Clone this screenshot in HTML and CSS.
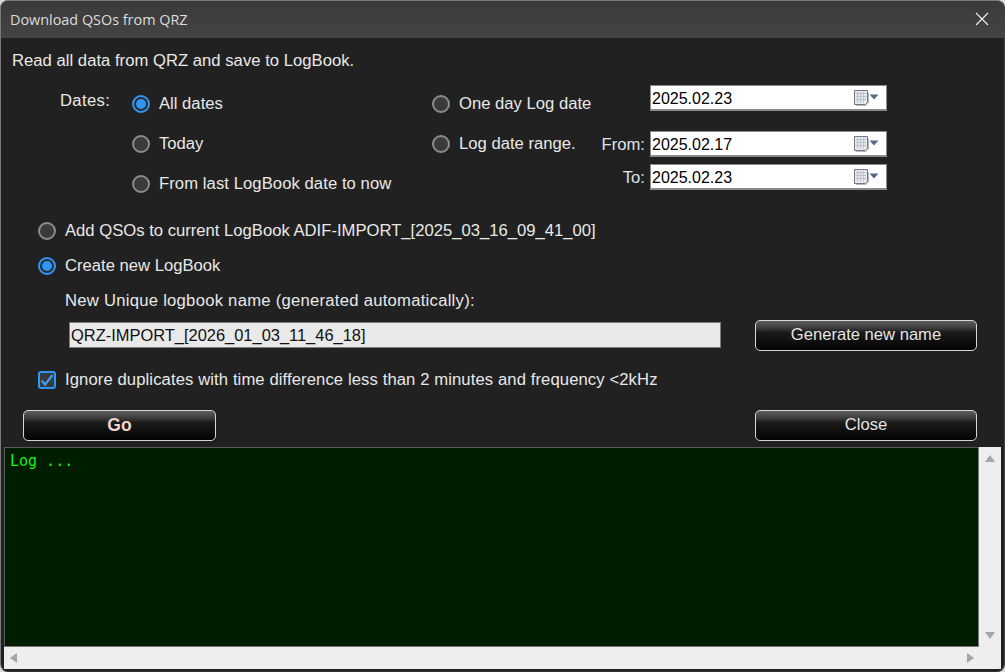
FILE: index.html
```html
<!DOCTYPE html>
<html lang="en">
<head>
<meta charset="utf-8">
<title>Download QSOs from QRZ</title>
<link rel="stylesheet" href="styles.css">
</head>
<body>
<svg class="defs" width="0" height="0" aria-hidden="true">
  <symbol id="cal" viewBox="0 0 26 16">
    <path d="M1.500 .5H14.500V12.500L12.500 14.500H1.500Z" fill="#e4e7ee" stroke="#77767a"/>
    <path d="M15.500 3V13L13 15.500H3" fill="none" stroke="#b9b9bb"/>
    <path d="M3 3.500H13M3 6.500H13M3 9.500H13M4.500 2V12.500M7.500 2V12.500M10.500 2V12.500" stroke="#bcc4d2" fill="none"/>
    <path d="M16.500 4.500H25.500L21 9.500Z" fill="#53688c"/>
  </symbol>
</svg>
<main class="window">
  <header class="titlebar">
    <span class="title">Download QSOs from QRZ</span>
    <svg class="close" width="14" height="14" viewBox="0 0 14 14"><path d="M1 1L13 13M13 1L1 13" stroke="#f0f0f0" stroke-width="1.1" fill="none"/></svg>
  </header>
  <div class="content">
    <p class="intro">Read all data from QRZ and save to LogBook.</p>

    <section class="dates">
      <span class="dates-label">Dates:</span>
      <div class="radio-col">
        <label class="opt"><i class="radio on"></i>All dates</label>
        <label class="opt"><i class="radio"></i>Today</label>
        <label class="opt spaced-s"><i class="radio"></i>From last LogBook date to now</label>
      </div>
      <div class="radio-col range-col">
        <label class="opt"><i class="radio"></i>One day Log date</label>
        <label class="opt"><i class="radio"></i>Log date range.</label>
      </div>
      <div class="fields">
        <div class="field first"><span class="date">2025.02.23<svg class="cal"><use href="#cal"/></svg></span></div>
        <div class="field second"><span class="field-label">From:</span><span class="date">2025.02.17<svg class="cal"><use href="#cal"/></svg></span></div>
        <div class="field third"><span class="field-label">To:</span><span class="date">2025.02.23<svg class="cal"><use href="#cal"/></svg></span></div>
      </div>
    </section>

    <section class="target">
      <label class="opt"><i class="radio"></i>Add QSOs to current LogBook ADIF-IMPORT_[2025_03_16_09_41_00]</label>
      <label class="opt"><i class="radio on"></i>Create new LogBook</label>
      <p class="hint">New Unique logbook name (generated automatically):</p>
      <div class="name-row">
        <span class="name-input">QRZ-IMPORT_[2026_01_03_11_46_18]</span>
        <button class="btn wide" type="button">Generate new name</button>
      </div>
      <label class="opt check-row"><i class="check"><svg width="14" height="14" viewBox="0 0 14 14"><path d="M1.500 7.500L5.200 11.500L12.500 2" fill="none" stroke="#3f9bf0" stroke-width="2.200"/></svg></i>Ignore duplicates with time difference less than 2 minutes and frequency &lt;2kHz</label>
    </section>

    <div class="actions">
      <button class="btn go" type="button">Go</button>
      <button class="btn wide" type="button">Close</button>
    </div>

    <section class="log">
      <div class="log-top">
        <pre class="log-text">Log ...</pre>
        <div class="vscroll"><i class="tri up"></i><i class="tri down"></i></div>
      </div>
      <div class="hscroll"><i class="tri left"></i><i class="tri right"></i></div>
    </section>
  </div>
</main>
</body>
</html>
```
FILE: styles.css
```css
* { box-sizing: border-box; }
html, body { margin: 0; height: 100%; background: #d8d8d8; overflow: hidden; }
.defs { display: block; height: 0; }
.window {
  width: 1005px; height: 672px; display: flex; flex-direction: column;
  background: #212121; border-radius: 8px 8px 8px 8px;
  font: 16.65px/18px "Liberation Sans", Arial, sans-serif; color: #e8e8e8;
  border: 1px solid #7a7a7a; border-bottom-color: #333; border-right-color: #444; overflow: hidden;
}
.titlebar {
  height: 37px; flex: none; display: flex; align-items: center; justify-content: space-between;
  padding: 0 15px 0 9px; background: linear-gradient(#3a3a3a, #444);
}
.title { font: 14.4px/18px "Open Sans", sans-serif; color: #dcdcdc; }
.close { display: block; margin-top: -1px; }
.content { flex: 1; min-height: 0; display: flex; flex-direction: column; padding: 0 3px 2px 3px; }
.intro { margin: 14px 0 0 8px; height: 18px; letter-spacing: .02px; }
.dates { display: flex; margin: 25px 0 0 0; height: 114px; }
.dates-label { width: 128px; padding: 0 0 0 56px; margin-top: -3px; flex: none; letter-spacing: .35px; }
.radio-col { width: 300px; flex: none; display: flex; flex-direction: column; gap: 22px; }
.range-col { width: 160px; }
.opt { display: flex; align-items: center; gap: 9px; height: 18px; white-space: nowrap; }
.spaced-s { letter-spacing: .07px; }
.radio { width: 18px; height: 18px; flex: none; border-radius: 50%; border: 2px solid #8c8c8c; background: #3a3a3a; }
.radio.on { border-color: #3096f5; background: #2d2d2d; position: relative; }
.radio.on::after { content: ""; position: absolute; inset: 2px; border-radius: 50%; background: #3096f5; }
.fields { display: flex; flex-direction: column; flex: none; width: 295px; margin-top: -10px; }
.field { display: flex; align-items: center; justify-content: flex-end; gap: 5px; height: 26px; }
.second { margin-top: 20px; }
.third { margin-top: 7px; }
.date {
  width: 237px; height: 26px; display: flex; align-items: center; justify-content: space-between;
  background: #fff; border: 1px solid #8a8a8a; border-width: 1px 1px 2px 1px; padding: 2px 7px 0 1px;
  font-size: 16px; color: #000;
}
.cal { width: 26px; height: 16px; display: block; margin-top: -2px; }
.field-label { color: #dfe6ee; margin-top: 2px; }
.target { margin-top: 13px; padding-left: 34px; }
.target .opt + .opt { margin-top: 17px; }
.hint { margin: 17px 0 0 27px; height: 18px; letter-spacing: .26px; }
.name-row { display: flex; align-items: flex-start; margin-top: 10px; padding-left: 31px; gap: 34px; }
.name-input {
  width: 652px; height: 26px; line-height: 24px; background: #e9e9e9; border: 1px solid #7d7d7d;
  margin-top: 2px; padding-left: 1px; color: #111; font-size: 16.45px;
}
.target .check-row { margin-top: 20px; letter-spacing: .1px; }
.check { width: 18px; height: 18px; flex: none; border: 2px solid #3096f5; border-radius: 3px; background: #3a3a3a; display: flex; align-items: center; justify-content: center; }
.check svg { display: block; }
.btn {
  display: block; height: 31px; padding: 0 0 2px; border: 1px solid #d6d6d6; border-radius: 5px;
  background: linear-gradient(#5e5e5e 0, #404040 22%, #1a1a1a 40%, #0f0f0f 70%, #030303 100%);
  color: #e4e4e4; font: 16.6px/18px "Liberation Sans", Arial, sans-serif;
}
.wide { width: 222px; }
.go { width: 193px; font-weight: bold; font-size: 17.5px; color: #efd3c8; }
.actions { display: flex; justify-content: space-between; margin-top: 21px; padding: 0 24px 0 19px; }
.log { flex: 1; min-height: 0; margin-top: 6px; display: flex; flex-direction: column; }
.log-top { flex: 1; min-height: 0; display: flex; }
.log-text {
  flex: 1; margin: 0; background: #001d00; border: 1px solid #5a5a5a; border-bottom-color: #777; border-right-color: #777;
  padding: 4px 5px; color: #12f012; font: 15px/18px "DejaVu Sans Mono", monospace;
}
.vscroll { width: 22px; flex: none; background: #eeeeee; display: flex; flex-direction: column; justify-content: space-between; align-items: center; padding: 8px 0; }
.hscroll { height: 22px; flex: none; background: #eeeeee; display: flex; justify-content: space-between; align-items: center; padding: 0 27px 0 6px; }
.tri { width: 0; height: 0; display: block; border: 0 solid transparent; }
.up { border-width: 0 5px 7px; border-bottom-color: #a6a6a6; }
.down { border-width: 7px 5px 0; border-top-color: #a6a6a6; }
.left { border-width: 5px 7px 5px 0; border-right-color: #a6a6a6; }
.right { border-width: 5px 0 5px 7px; border-left-color: #a6a6a6; }
```
